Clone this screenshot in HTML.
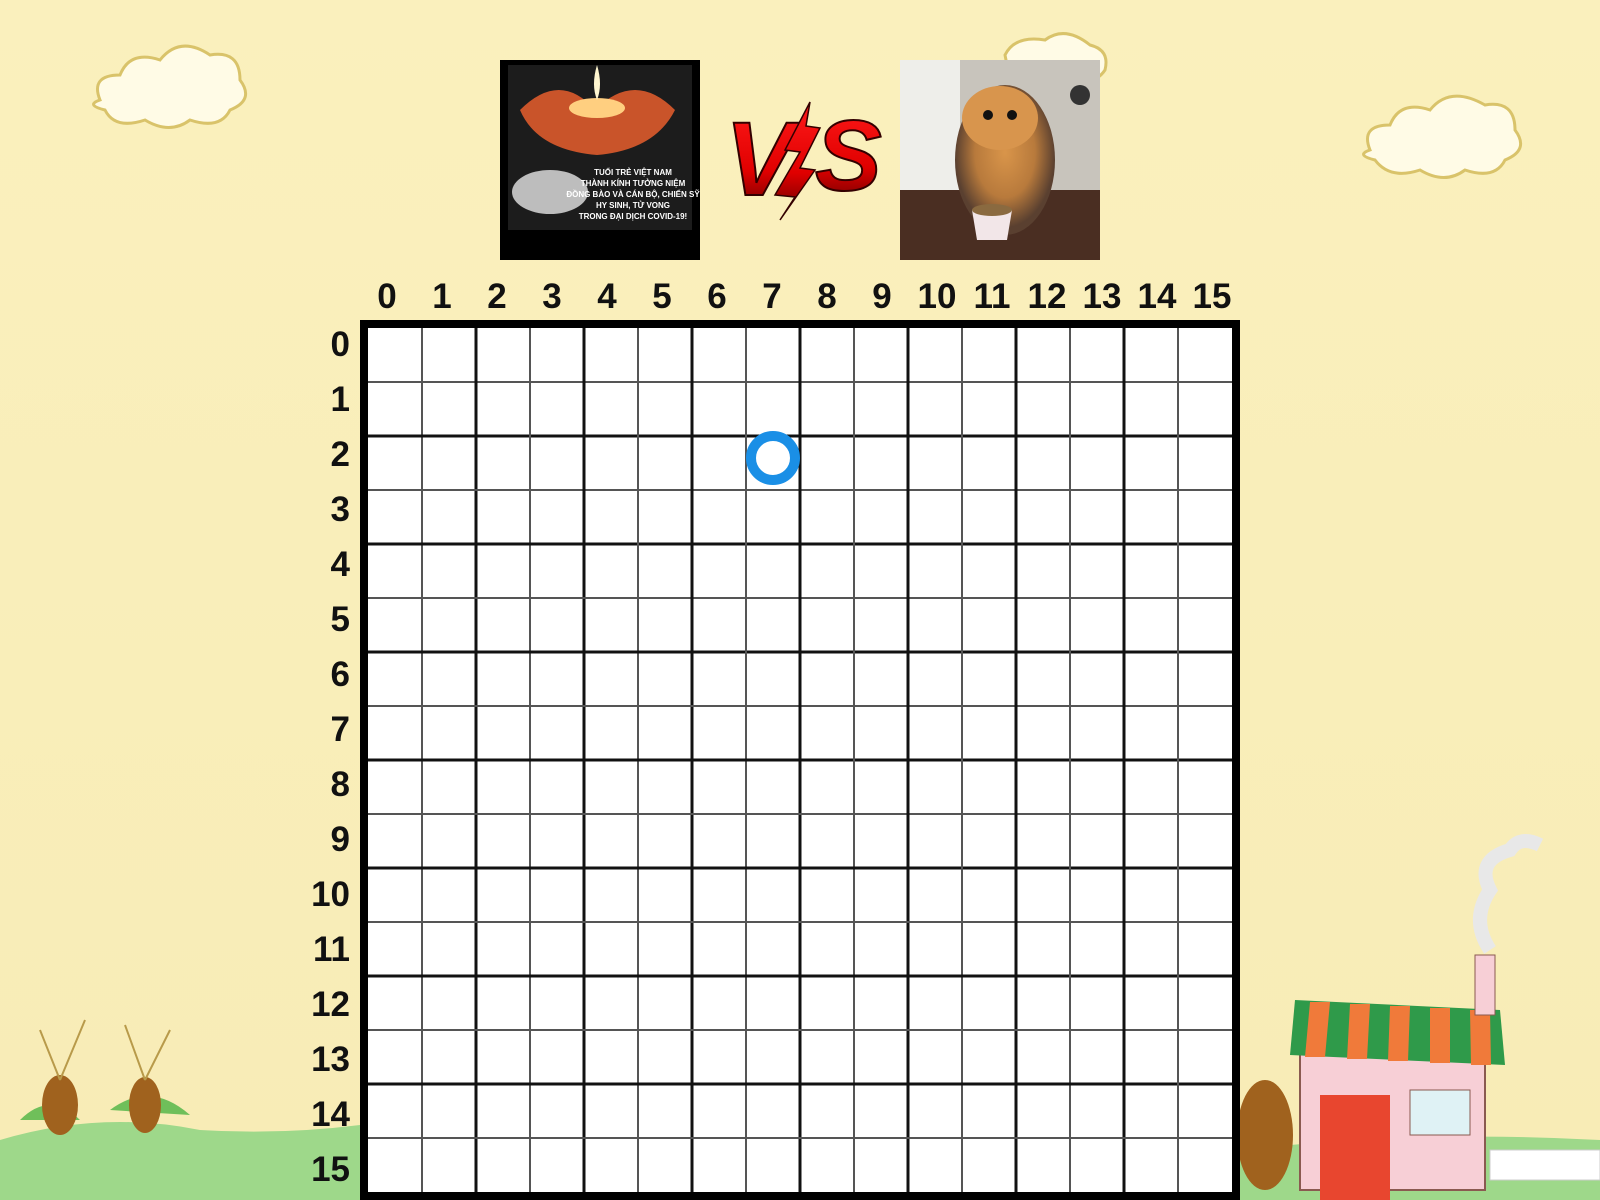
<!DOCTYPE html>
<html><head><meta charset="utf-8"><style>
html,body{margin:0;padding:0}
body{width:1600px;height:1200px;position:relative;overflow:hidden;background:linear-gradient(#faf0bd,#f8ecb6);font-family:"Liberation Sans",sans-serif}
.lab{position:absolute;font-weight:bold;font-size:35px;line-height:40px;color:#111}
</style></head><body>
<svg width="1600" height="1200" style="position:absolute;left:0;top:0">
<defs>
<linearGradient id="vs" x1="0" y1="0" x2="0" y2="1"><stop offset="0" stop-color="#ff1a1a"/><stop offset="0.6" stop-color="#e00000"/><stop offset="1" stop-color="#5a0000"/></linearGradient>
<radialGradient id="cat" cx="0.5" cy="0.45" r="0.5"><stop offset="0" stop-color="#d9954a"/><stop offset="0.6" stop-color="#b87a3c"/><stop offset="1" stop-color="#5a4030"/></radialGradient>
</defs>
<g fill="#fffbe6" stroke="#d9c36a" stroke-width="3">
<path d="M100 100 q-10-25 20-25 q10-25 40-15 q20-25 50-5 q30-5 30 25 q15 20-10 30 q-10 20-40 10 q-20 15-45 0 q-30 10-40-10 q-20-5-5-10z"/>
<path d="M1370 150 q-10-25 20-25 q10-25 40-15 q20-25 55-5 q30-5 30 25 q15 20-10 30 q-10 20-40 10 q-20 15-45 0 q-30 10-45-10 q-20-5-5-10z"/>
<path d="M1005 55 q10-20 40-15 q20-15 45 5 q20 5 15 25 q-10 15-30 10 l-65 0z"/>
</g>
<path d="M0 1140 q100-30 200-10 q80 5 160 -5 L360 1200 L0 1200z" fill="#9ed88a"/>
<path d="M20 1120 q30-30 60 0z M110 1110 q40-30 80 5z" fill="#6fbf5a"/>
<path d="M1240 1150 q180-20 360-10 L1600 1200 L1240 1200z" fill="#9ed88a"/>
<ellipse cx="60" cy="1105" rx="18" ry="30" fill="#a0621e"/><ellipse cx="145" cy="1105" rx="16" ry="28" fill="#a0621e"/>
<path d="M60 1080 l-20-50 M60 1080 l25-60 M145 1080 l-20-55 M145 1080 l25-50" stroke="#b89a4a" stroke-width="2" fill="none"/>
<ellipse cx="1265" cy="1135" rx="28" ry="55" fill="#a0621e"/>
<rect x="1300" y="1040" width="185" height="150" fill="#f7cfd6" stroke="#8a5a50" stroke-width="2"/>
<path d="M1295 1000 L1500 1010 L1505 1065 L1290 1055z" fill="#2f9a4a"/>
<path d="M1310 1002 l20 0 l-5 55 l-20 0z M1350 1004 l20 0 l-3 55 l-20 0z M1390 1006 l20 0 l-2 55 l-20 0z M1430 1008 l20 0 l0 55 l-20 0z M1470 1010 l20 0 l1 55 l-20 0z" fill="#f07a3a"/>
<rect x="1320" y="1095" width="70" height="105" fill="#e8462f"/>
<rect x="1410" y="1090" width="60" height="45" fill="#dff2f5" stroke="#8a5a50"/>
<rect x="1475" y="955" width="20" height="60" fill="#f7cfd6" stroke="#8a5a50"/>
<path d="M1490 950 q-20-30 0-60 q-15-30 20-40 q10-15 30-5" stroke="#e8e8e8" stroke-width="14" fill="none"/>
<rect x="1490" y="1150" width="110" height="30" fill="#fff" stroke="#ccc"/>
<rect x="500" y="60" width="200" height="200" fill="#000"/>
<rect x="508" y="65" width="184" height="165" fill="#1c1c1c"/>
<path d="M520 110 q40-40 75 0 q40-40 80 0 q-20 40-78 45 q-60-5-77-45z" fill="#c9542a"/>
<ellipse cx="597" cy="108" rx="28" ry="10" fill="#ffcf80"/>
<path d="M597 65 q6 20 0 35 q-6-15 0-35z" fill="#fff6d0"/>
<ellipse cx="550" cy="192" rx="38" ry="22" fill="#bdbdbd"/>
<g fill="#fff" font-size="8" font-weight="bold" text-anchor="middle" font-family="Liberation Sans,sans-serif">
<text x="633" y="175">TUỔI TRẺ VIỆT NAM</text><text x="633" y="186">THÀNH KÍNH TƯỞNG NIỆM</text>
<text x="633" y="197">ĐỒNG BÀO VÀ CÁN BỘ, CHIẾN SỸ</text><text x="633" y="208">HY SINH, TỬ VONG</text>
<text x="633" y="219">TRONG ĐẠI DỊCH COVID-19!</text></g>
<text x="725" y="195" font-size="105" font-style="italic" font-weight="bold" fill="url(#vs)" stroke="#300" stroke-width="2" font-family="Liberation Sans,sans-serif">V</text>
<text x="815" y="190" font-size="100" font-style="italic" font-weight="bold" fill="url(#vs)" stroke="#300" stroke-width="2" font-family="Liberation Sans,sans-serif">S</text>
<path d="M810 102 L785 150 L800 152 L775 195 L795 197 L780 220 L815 170 L800 168 L820 128 L806 126z" fill="url(#vs)" stroke="#300" stroke-width="1.5"/>
<rect x="900" y="60" width="200" height="200" fill="#c8c4bc"/>
<rect x="900" y="60" width="60" height="140" fill="#eeeeea"/>
<rect x="900" y="190" width="200" height="70" fill="#4a2e22"/>
<ellipse cx="1005" cy="160" rx="50" ry="75" fill="url(#cat)"/>
<ellipse cx="1000" cy="118" rx="38" ry="32" fill="#d8954d"/>
<circle cx="988" cy="115" r="5" fill="#111"/><circle cx="1012" cy="115" r="5" fill="#111"/>
<path d="M972 210 l40 0 l-5 30 l-30 0z" fill="#f2e6e8"/><ellipse cx="992" cy="210" rx="20" ry="6" fill="#8a6a40"/>
<circle cx="1080" cy="95" r="10" fill="#333"/>
<rect x="364" y="324" width="872" height="872" fill="#fff" stroke="#000" stroke-width="8"/>
<g stroke="#444" stroke-width="2" id="g"></g>
<circle cx="773" cy="458" r="22" fill="none" stroke="#1a8fe6" stroke-width="10"/>
</svg>
<div id="labs"></div>
<script>
var g=document.getElementById('g'),s='';
for(var i=1;i<16;i++){var p=368+54*i,q=328+54*i,w=i%2==0?3:2,c=i%2==0?'#111':'#555';
s+='<line x1="'+p+'" y1="328" x2="'+p+'" y2="1192" stroke="'+c+'" stroke-width="'+w+'"/>';
s+='<line x1="368" y1="'+q+'" x2="1232" y2="'+q+'" stroke="'+c+'" stroke-width="'+w+'"/>';}
g.innerHTML=s;
var h='';
for(var i=0;i<16;i++){
h+='<div class="lab" style="left:'+(387+55*i-30)+'px;width:60px;text-align:center;top:277px">'+i+'</div>';
h+='<div class="lab" style="left:290px;width:60px;text-align:right;top:'+(345+55*i-20)+'px">'+i+'</div>';}
document.getElementById('labs').innerHTML=h;
</script>
</body></html>
